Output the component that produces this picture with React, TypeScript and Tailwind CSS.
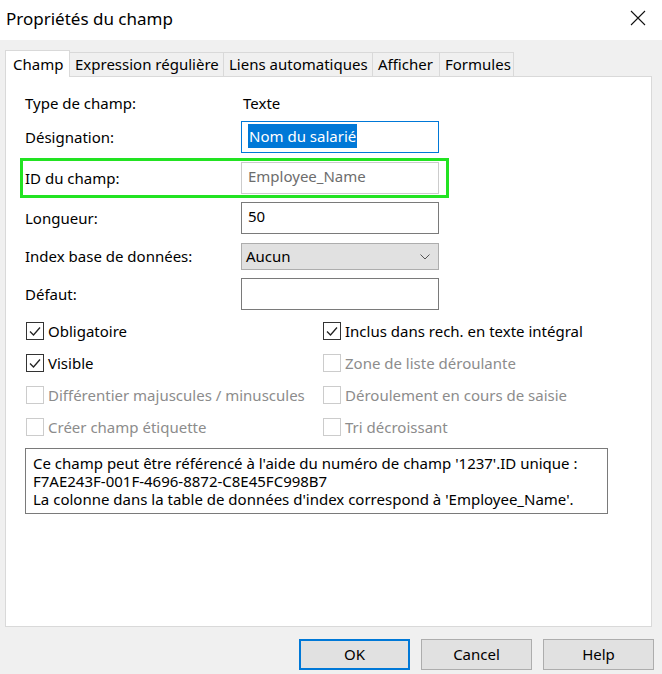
import React from "react";

const FONT = { fontFamily: '"Segoe UI", "Noto Sans", sans-serif' };

function Check({ checked, disabled, label }: { checked?: boolean; disabled?: boolean; label: string }) {
  return (
    <div className="flex items-center h-[32px]">
      <div
        className={
          "w-[18px] h-[18px] border flex items-center justify-center bg-white shrink-0 ml-[1px] " +
          (disabled ? "border-[#cccccc]" : "border-[#333333]")
        }
      >
        {checked && (
          <svg width="14" height="14" viewBox="0 0 14 14">
            <path d="M2 7.5 L5.5 11 L12 3.5" fill="none" stroke="#222" strokeWidth="1.3" />
          </svg>
        )}
      </div>
      <span className={"ml-[4px] whitespace-nowrap " + (disabled ? "text-[#8c8c8c]" : "text-black")}>{label}</span>
    </div>
  );
}

export default function App() {
  return (
    <div className="w-[662px] h-[674px] bg-[#f0f0f0] flex flex-col text-[15px] text-black overflow-hidden" style={FONT}>
      {/* Title bar */}
      <div className="h-[40px] bg-white flex items-center justify-between pl-[6px] pr-[16px] shrink-0">
        <span className="text-[17px] leading-none -mt-[3px]">Propriétés du champ</span>
        <svg width="16" height="16" viewBox="0 0 16 16" className="-mt-[5px]">
          <path d="M1 1 L15 15 M15 1 L1 15" stroke="#111" strokeWidth="1.1" />
        </svg>
      </div>

      {/* Tabs */}
      <div className="px-[5px] pt-[10px] flex flex-col">
        <div className="flex items-end h-[26px] relative z-10 whitespace-nowrap">
          <div className="h-[27px] px-[7px] border border-b-0 border-[#d9d9d9] bg-white flex items-center -mb-px w-[65px]">
            Champ
          </div>
          <div className="h-[24px] px-[5px] border border-l-0 border-b-0 border-[#d9d9d9] bg-[#f0f0f0] flex items-center w-[154px] overflow-hidden">
            Expression régulière
          </div>
          <div className="h-[24px] px-[5px] border border-l-0 border-b-0 border-[#d9d9d9] bg-[#f0f0f0] flex items-center w-[149px] overflow-hidden">
            Liens automatiques
          </div>
          <div className="h-[24px] px-[5px] border border-l-0 border-b-0 border-[#d9d9d9] bg-[#f0f0f0] flex items-center w-[67px] overflow-hidden">
            Afficher
          </div>
          <div className="h-[24px] px-[5px] border border-l-0 border-b-0 border-[#d9d9d9] bg-[#f0f0f0] flex items-center w-[74px] overflow-hidden">
            Formules
          </div>
        </div>

        {/* Panel */}
        <div className="w-[647px] h-[551px] border border-[#d9d9d9] bg-white flex flex-col pl-[19px] pt-[15px]">
          <div className="flex items-center h-[22px]">
            <span className="w-[216px]">Type de champ:</span>
            <span className="ml-[2px]">Texte</span>
          </div>

          <div className="flex items-center h-[32px] mt-[7px]">
            <span className="w-[216px]">Désignation:</span>
            <div className="w-[198px] h-[32px] border border-[#0078d7] bg-white flex items-start pt-[2px] pl-[6px]">
              <span className="bg-[#0078d7] text-white leading-[24px] px-[1px]">Nom du salarié</span>
            </div>
          </div>

          <div className="flex items-center h-[40px] mt-[5px] -ml-[5px] w-[429px] border-[3px] border-[#22e322] pl-[2px]">
            <span className="w-[216px]">ID du champ:</span>
            <div className="w-[198px] h-[32px] border border-[#cccccc] bg-white pl-[6px] pt-[1px] leading-[24px] text-[#6d6d6d]">
              Employee_Name
            </div>
          </div>

          <div className="flex items-center h-[32px] mt-[4px]">
            <span className="w-[216px]">Longueur:</span>
            <div className="w-[198px] h-[32px] border border-[#7a7a7a] bg-white pl-[6px] pt-[1px] leading-[24px]">50</div>
          </div>

          <div className="flex items-center h-[27px] mt-[9px]">
            <span className="w-[216px]">Index base de données:</span>
            <div className="w-[198px] h-[27px] border border-[#adadad] bg-[#e1e1e1] flex items-center justify-between pl-[4px] pr-[8px]">
              <span>Aucun</span>
              <svg width="10" height="6" viewBox="0 0 10 6">
                <path d="M0.5 0.5 L5 5 L9.5 0.5" fill="none" stroke="#555" strokeWidth="1" />
              </svg>
            </div>
          </div>

          <div className="flex items-center h-[32px] mt-[8px]">
            <span className="w-[216px]">Défaut:</span>
            <div className="w-[198px] h-[32px] border border-[#7a7a7a] bg-white" />
          </div>

          <div className="grid grid-cols-[297px_1fr] mt-[5px]">
            <Check checked label="Obligatoire" />
            <Check checked label="Inclus dans rech. en texte intégral" />
            <Check checked label="Visible" />
            <Check disabled label="Zone de liste déroulante" />
            <Check disabled label="Différentier majuscules / minuscules" />
            <Check disabled label="Déroulement en cours de saisie" />
            <Check disabled label="Créer champ étiquette" />
            <Check disabled label="Tri décroissant" />
          </div>

          <div className="w-[583px] h-[66px] mt-[5px] border border-[#7a7a7a] bg-white pl-[7px] pt-[5px] leading-[18px]">
            <div>Ce champ peut être référencé à l'aide du numéro de champ '1237'.ID unique :</div>
            <div>F7AE243F-001F-4696-8872-C8E45FC998B7</div>
            <div>La colonne dans la table de données d'index correspond à 'Employee_Name'.</div>
          </div>
        </div>
      </div>

      {/* Buttons */}
      <div className="flex justify-end gap-[11px] pr-[8px] mt-[12px]">
        <button className="w-[111px] h-[31px] border-2 border-[#0078d7] bg-[#e1e1e1] flex items-center justify-center">OK</button>
        <button className="w-[111px] h-[31px] border border-[#adadad] bg-[#e1e1e1] flex items-center justify-center">Cancel</button>
        <button className="w-[111px] h-[31px] border border-[#adadad] bg-[#e1e1e1] flex items-center justify-center">Help</button>
      </div>
    </div>
  );
}
